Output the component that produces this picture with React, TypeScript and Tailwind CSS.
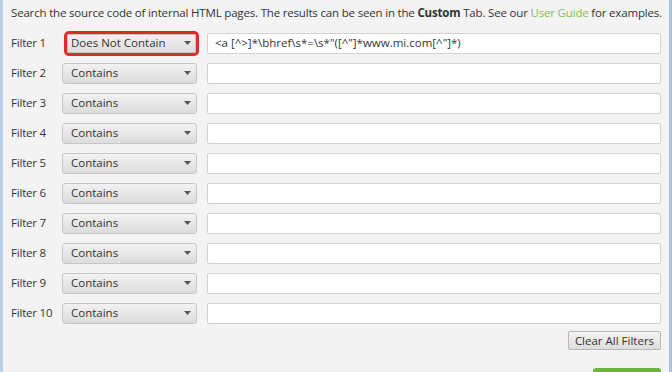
import React from "react";

const filters = [
  { name: "Filter 1", mode: "Does Not Contain", value: '<a [^>]*\\bhref\\s*=\\s*"([^"]*www.mi.com[^"]*)' },
  { name: "Filter 2", mode: "Contains", value: "" },
  { name: "Filter 3", mode: "Contains", value: "" },
  { name: "Filter 4", mode: "Contains", value: "" },
  { name: "Filter 5", mode: "Contains", value: "" },
  { name: "Filter 6", mode: "Contains", value: "" },
  { name: "Filter 7", mode: "Contains", value: "" },
  { name: "Filter 8", mode: "Contains", value: "" },
  { name: "Filter 9", mode: "Contains", value: "" },
  { name: "Filter 10", mode: "Contains", value: "" },
];

function Caret() {
  return (
    <svg width="7" height="4" viewBox="0 0 7 4" className="shrink-0">
      <path d="M0 0h7L3.5 4z" fill="#555" />
    </svg>
  );
}

function Select({ label, highlight }: { label: string; highlight?: boolean }) {
  if (highlight) {
    return (
      <div className="w-[135px] shrink-0 flex">
        <div className="ml-[5px] w-[129px] h-[19px] flex items-center justify-between pl-[3px] pr-[4px] rounded-[2px] bg-gradient-to-b from-[#f2f2f2] to-[#dedede] border border-[#c4c4c4] ring-[3px] ring-[#dc2d26] text-[#333]">
          <span>{label}</span>
          <Caret />
        </div>
      </div>
    );
  }
  return (
    <div className="w-[135px] h-[21px] shrink-0 flex items-center justify-between pl-[8px] pr-[5px] rounded-[3px] bg-gradient-to-b from-[#f2f2f2] to-[#dcdcdc] border border-[#c6c6c6] text-[#333]">
      <span>{label}</span>
      <Caret />
    </div>
  );
}

export default function App() {
  return (
    <div className="w-[672px] h-[372px] overflow-hidden bg-[#f3f3f3] border-l-[3px] border-l-[#b8cfe6] border-r-[3px] border-r-[#a9c3de] flex flex-col pl-[8px] pr-[8px] text-[11.5px] font-['Open_Sans',sans-serif] text-[#333]">
      <p className="pt-[5px] leading-[16px] whitespace-nowrap tracking-[-0.18px]">
        Search the source code of internal HTML pages. The results can be seen in the <b>Custom</b> Tab. See our{" "}
        <span className="text-[#86bb53]">User Guide</span> for examples.
      </p>

      <div className="mt-[7px] flex flex-col">
        {filters.map((f, i) => (
          <div key={f.name} className="h-[30px] flex items-center">
            <span className="w-[51px] shrink-0 tracking-[-0.2px]">{f.name}</span>
            <Select label={f.mode} highlight={i === 0} />
            <div className="ml-[10px] flex-1 h-[21px] flex items-center pl-[7px] bg-white border border-[#d2d2d2] rounded-[2px] text-[11.5px] whitespace-nowrap">
              {f.value}
            </div>
          </div>
        ))}
      </div>

      <div className="mt-[3px] flex justify-end">
        <button className="w-[93px] h-[19px] flex items-center justify-center rounded-[2px] border border-[#b8b8b8] bg-gradient-to-b from-[#f4f4f4] to-[#dddddd] text-[#333] text-[11.5px]">
          Clear All Filters
        </button>
      </div>

      <div className="mt-[18px] flex justify-end">
        <div className="w-[68px] h-[12px] rounded-t-[3px] bg-[#6cb43c]" />
      </div>
    </div>
  );
}
